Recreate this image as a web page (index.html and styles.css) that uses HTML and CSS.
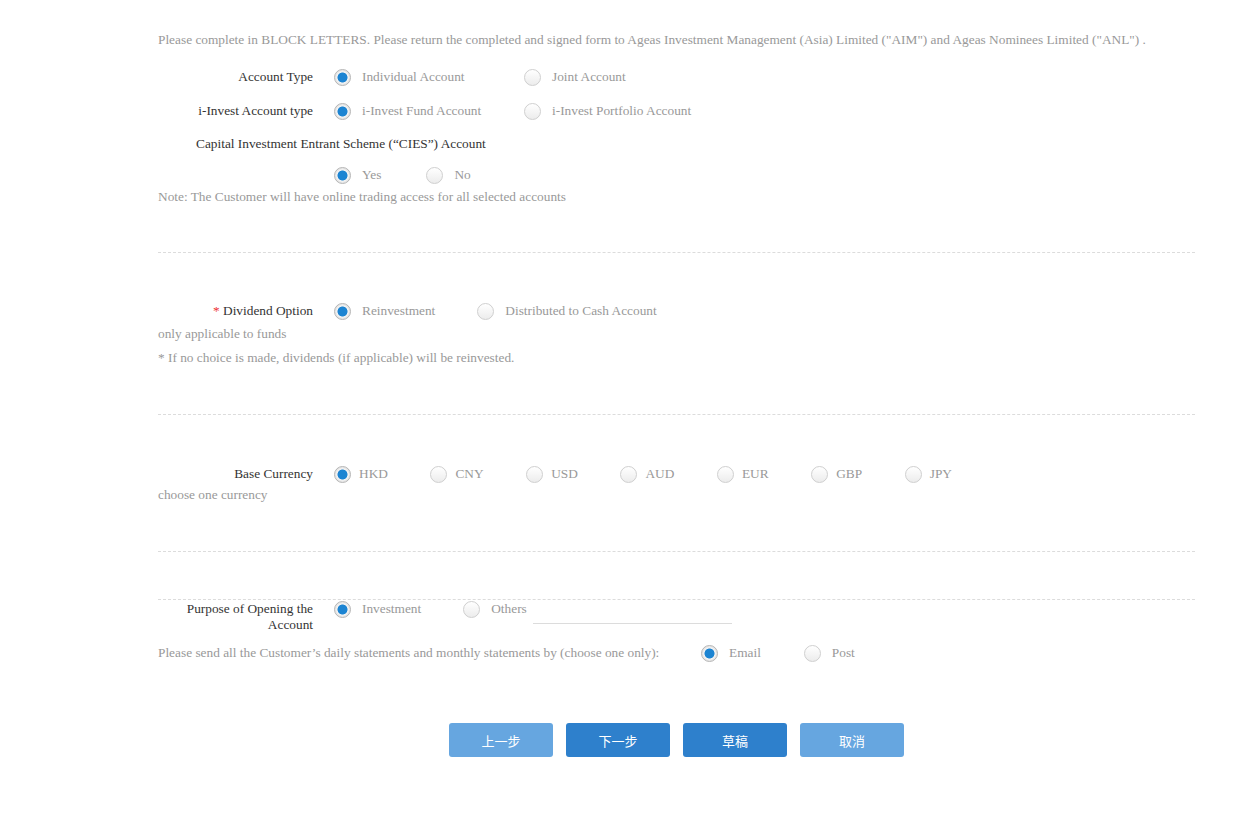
FILE: index.html
```html
<!DOCTYPE html>
<html>
<head>
<meta charset="utf-8">
<link rel="stylesheet" href="styles.css">
</head>
<body>
<div class="page">
  <p class="intro">Please complete in BLOCK LETTERS. Please return the completed and signed form to Ageas Investment Management (Asia) Limited ("AIM") and Ageas Nominees Limited ("ANL") .</p>

  <div class="row r-acct">
    <div class="label">Account Type</div>
    <div class="opts">
      <span class="opt opt-wide"><span class="radio on"></span>Individual Account</span>
      <span class="opt"><span class="radio"></span>Joint Account</span>
    </div>
  </div>
  <div class="row r-invest">
    <div class="label">i-Invest Account type</div>
    <div class="opts">
      <span class="opt opt-wide"><span class="radio on"></span>i-Invest Fund Account</span>
      <span class="opt"><span class="radio"></span>i-Invest Portfolio Account</span>
    </div>
  </div>
  <div class="cies-label">Capital Investment Entrant Scheme (“CIES”) Account</div>
  <div class="row r-cies">
    <div class="label"></div>
    <div class="opts">
      <span class="opt opt-yes"><span class="radio on"></span>Yes</span>
      <span class="opt"><span class="radio"></span>No</span>
    </div>
  </div>
  <p class="note n-trade">Note: The Customer will have online trading access for all selected accounts</p>

  <hr class="sep s1">

  <div class="row r-div">
    <div class="label"><span class="req">*</span> Dividend Option</div>
    <div class="opts">
      <span class="opt"><span class="radio on"></span>Reinvestment</span>
      <span class="opt"><span class="radio"></span>Distributed to Cash Account</span>
    </div>
  </div>
  <p class="note n-funds">only applicable to funds</p>
  <p class="note n-reinv">* If no choice is made, dividends (if applicable) will be reinvested.</p>

  <hr class="sep s2">

  <div class="row r-cur">
    <div class="label">Base Currency</div>
    <div class="opts cur">
      <span class="opt"><span class="radio on"></span>HKD</span>
      <span class="opt"><span class="radio"></span>CNY</span>
      <span class="opt"><span class="radio"></span>USD</span>
      <span class="opt"><span class="radio"></span>AUD</span>
      <span class="opt"><span class="radio"></span>EUR</span>
      <span class="opt"><span class="radio"></span>GBP</span>
      <span class="opt"><span class="radio"></span>JPY</span>
    </div>
  </div>
  <p class="note n-cur">choose one currency</p>

  <hr class="sep s3">
  <hr class="sep s4">

  <div class="row r-purpose">
    <div class="label">Purpose of Opening the Account</div>
    <div class="opts">
      <span class="opt"><span class="radio on"></span>Investment</span>
      <span class="opt opt-others"><span class="radio"></span>Others</span>
      <span class="other-input"></span>
    </div>
  </div>
  <div class="row r-send">
    <p class="note send-text">Please send all the Customer’s daily statements and monthly statements by (choose one only):</p>
    <div class="opts">
      <span class="opt"><span class="radio on"></span>Email</span>
      <span class="opt"><span class="radio"></span>Post</span>
    </div>
  </div>

  <div class="buttons">
    <button class="btn light">上一步</button>
    <button class="btn dark">下一步</button>
    <button class="btn dark">草稿</button>
    <button class="btn light">取消</button>
  </div>
</div>
</body>
</html>
```

FILE: styles.css
```css
* { box-sizing: border-box; }
body {
  margin: 0;
  background: #fff;
  font-family: "Liberation Serif", "Times New Roman", serif;
  font-size: 13.33px;
  color: #333;
}
.page {
  width: 1037px;
  margin-left: 158px;
  padding-top: 32px;
}
p { margin: 0; }
.intro {
  color: #999;
  line-height: 16px;
  white-space: nowrap;
}
.row {
  display: flex;
  align-items: center;
}
.label {
  width: 176px;
  flex: none;
  text-align: right;
  padding-right: 21px;
  line-height: 16px;
  color: #333;
}
.req { color: #e33; }
.opts {
  display: flex;
  align-items: center;
}
.opt {
  display: flex;
  align-items: center;
  color: #999;
  margin-right: 42px;
  line-height: 18px;
}
.opt-wide { min-width: 190px; margin-right: 0; }
.opt-yes { margin-right: 45px; }
.radio {
  width: 17px;
  height: 17px;
  flex: none;
  border-radius: 50%;
  border: 1px solid #cfcfcf;
  background: linear-gradient(#ffffff, #ececec);
  margin-right: 11px;
  position: relative;
}
.radio.on {
  border-color: #b4b4b4;
  box-shadow: 0 0 0 1px #e6e6e6 inset;
  background: radial-gradient(circle at center, #1c84d2 0, #1c84d2 4.6px, #f3f3f3 5.4px, #e9e9e9 100%);
}
.cur .radio { margin-right: 8px; }
.cur .opt { margin-right: 42.6px; }

.r-acct { margin-top: 20px; }
.r-invest { margin-top: 16px; }
.cies-label { margin-left: 38px; margin-top: 16px; line-height: 16px; }
.r-cies { margin-top: 14px; }
.note { color: #999; line-height: 16px; }
.n-trade { margin-top: 5px; }

.sep {
  border: 0;
  border-top: 1px dashed #dcdcdc;
  margin: 0;
  height: 0;
}
.s1 { margin-top: 47px; }
.r-div { margin-top: 49px; }
.n-funds { margin-top: 6px; }
.n-reinv { margin-top: 8px; }
.s2 { margin-top: 48px; }
.r-cur { margin-top: 50px; }
.n-cur { margin-top: 4px; }
.s3 { margin-top: 48px; }
.s4 { margin-top: 47px; }

.r-purpose { align-items: flex-start; margin-top: 0; }
.r-purpose .label { padding-top: 1px; }
.r-purpose .opts { align-items: flex-start; }
.opt-others { margin-right: 6px; }
.other-input {
  width: 199px;
  height: 24px;
  border-bottom: 1px solid #dcdcdc;
}
.r-send { margin-top: 11px; }
.send-text { width: 543px; flex: none; }
.r-send .opt { margin-right: 43px; }

.buttons {
  display: flex;
  gap: 13px;
  margin-top: 61px;
  margin-left: 291px;
}
.btn {
  width: 104px;
  height: 34px;
  border: 0;
  border-radius: 3px;
  color: #fff;
  font-family: "Noto Sans CJK SC", sans-serif;
  font-size: 13px;
  padding: 0;
}
.btn.light { background: #66a6e0; }
.btn.dark { background: #2e80cc; }
```
